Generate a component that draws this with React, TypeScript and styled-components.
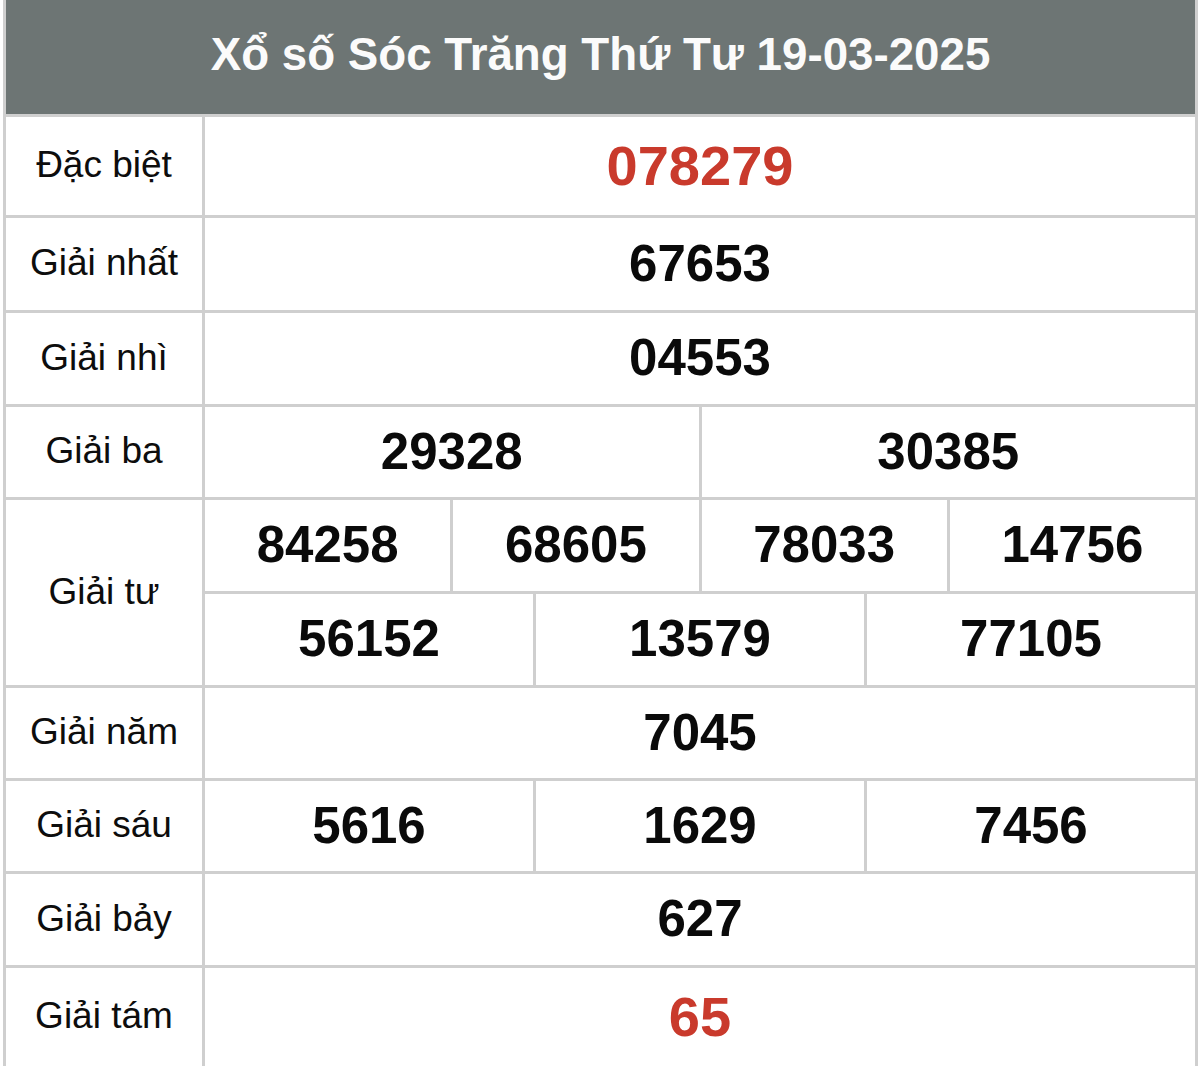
import React from 'react';
import styled, { createGlobalStyle } from 'styled-components';

const GlobalStyle = createGlobalStyle`
  html, body {
    margin: 0;
    padding: 0;
    background: #ffffff;
  }
  body {
    font-family: 'Liberation Sans', Arial, sans-serif;
  }
`;

const LINE = '#cfcfcf';

const Table = styled.div`
  width: 1195px;
  margin-left: 3px;
  border-left: 3px solid ${LINE};
  border-right: 3px solid ${LINE};
  box-sizing: border-box;
  background: #fff;
`;

const Header = styled.div`
  height: 114px;
  background: #6d7574;
  color: #fbfbfb;
  display: flex;
  align-items: center;
  justify-content: center;
  font-weight: 700;
  font-size: 45.7px;
  padding-bottom: 4px;
  box-sizing: border-box;
`;

const Row = styled.div<{ $height: number }>`
  display: flex;
  height: ${({ $height }) => $height}px;
  border-top: 3px solid ${LINE};
  box-sizing: border-box;
`;

const Label = styled.div`
  width: 199px;
  flex-shrink: 0;
  border-right: 3px solid ${LINE};
  box-sizing: border-box;
  display: flex;
  align-items: center;
  justify-content: center;
  font-size: 37px;
  color: #0d0d0d;
  padding-bottom: 2px;
`;

const Values = styled.div`
  flex: 1;
  display: flex;
  flex-direction: column;
`;

const ValueLine = styled.div`
  flex: 1;
  display: flex;
  & + & {
    border-top: 3px solid ${LINE};
  }
`;

const Cell = styled.div<{ $red?: boolean }>`
  flex: 1;
  display: flex;
  align-items: center;
  justify-content: center;
  font-weight: 700;
  font-size: ${({ $red }) => ($red ? 56 : 51)}px;
  color: ${({ $red }) => ($red ? '#c93a2c' : '#0a0a0a')};
  padding-bottom: 2px;
  & + & {
    border-left: 3px solid ${LINE};
  }
`;

type Prize = {
  label: string;
  height: number;
  lines: string[][];
  red?: boolean;
};

const prizes: Prize[] = [
  { label: 'Đặc biệt', height: 101, lines: [['078279']], red: true },
  { label: 'Giải nhất', height: 95, lines: [['67653']] },
  { label: 'Giải nhì', height: 94, lines: [['04553']] },
  { label: 'Giải ba', height: 93, lines: [['29328', '30385']] },
  {
    label: 'Giải tư',
    height: 188,
    lines: [
      ['84258', '68605', '78033', '14756'],
      ['56152', '13579', '77105'],
    ],
  },
  { label: 'Giải năm', height: 93, lines: [['7045']] },
  { label: 'Giải sáu', height: 93, lines: [['5616', '1629', '7456']] },
  { label: 'Giải bảy', height: 94, lines: [['627']] },
  { label: 'Giải tám', height: 101, lines: [['65']], red: true },
];

export default function App() {
  return (
    <>
      <GlobalStyle />
      <Table>
        <Header>Xổ số Sóc Trăng Thứ Tư 19-03-2025</Header>
        {prizes.map((p) => (
          <Row key={p.label} $height={p.height}>
            <Label>{p.label}</Label>
            <Values>
              {p.lines.map((line, i) => (
                <ValueLine key={i}>
                  {line.map((n) => (
                    <Cell key={n} $red={p.red}>
                      {n}
                    </Cell>
                  ))}
                </ValueLine>
              ))}
            </Values>
          </Row>
        ))}
      </Table>
    </>
  );
}
